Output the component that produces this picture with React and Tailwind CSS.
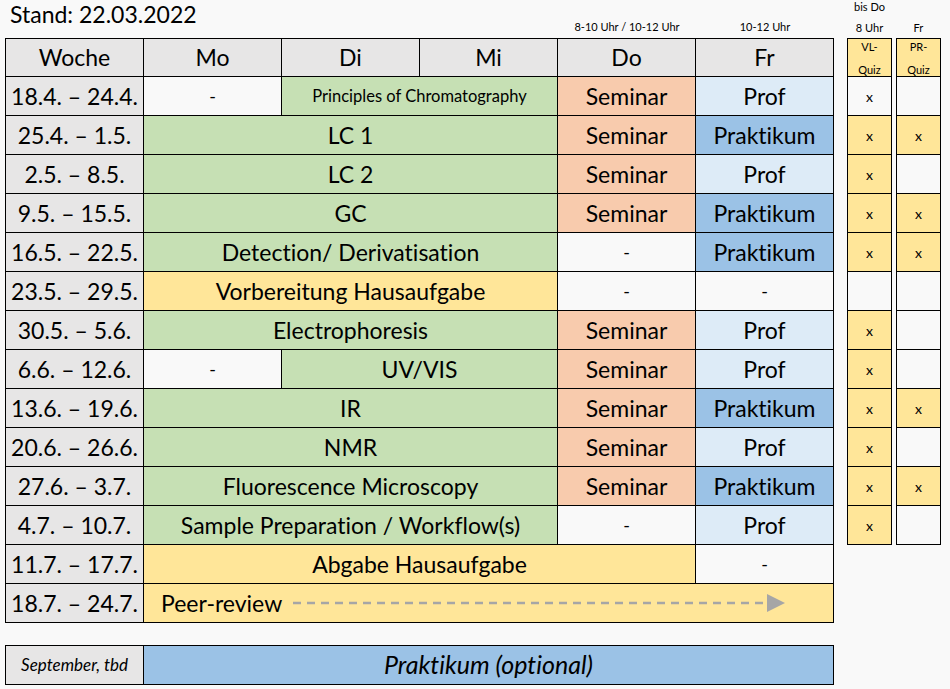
import React from 'react';

const C = {
    gray: 'bg-[#e7e6e6]',
    white: 'bg-[#f9f9f9]',
    green: 'bg-[#c6e0b4]',
    salmon: 'bg-[#f8cbad]',
    light: 'bg-[#ddebf7]',
    blue: 'bg-[#9bc2e6]',
    yellow: 'bg-[#ffe699]',
};

const weeks = [
    { week: '18.4. – 24.4.', cells: [
        { text: '-', bg: C.white, span: 'col-span-1', small: true },
        { text: 'Principles of Chromatography', bg: C.green, span: 'col-span-2', size: 'text-[16.5px]' },
        { text: 'Seminar', bg: C.salmon }, { text: 'Prof', bg: C.light } ] },
    { week: '25.4. – 1.5.', cells: [
        { text: 'LC 1', bg: C.green, span: 'col-span-3' },
        { text: 'Seminar', bg: C.salmon }, { text: 'Praktikum', bg: C.blue } ] },
    { week: '2.5. – 8.5.', cells: [
        { text: 'LC 2', bg: C.green, span: 'col-span-3' },
        { text: 'Seminar', bg: C.salmon }, { text: 'Prof', bg: C.light } ] },
    { week: '9.5. – 15.5.', cells: [
        { text: 'GC', bg: C.green, span: 'col-span-3' },
        { text: 'Seminar', bg: C.salmon }, { text: 'Praktikum', bg: C.blue } ] },
    { week: '16.5. – 22.5.', cells: [
        { text: 'Detection/ Derivatisation', bg: C.green, span: 'col-span-3' },
        { text: '-', bg: C.white, small: true }, { text: 'Praktikum', bg: C.blue } ] },
    { week: '23.5. – 29.5.', cells: [
        { text: 'Vorbereitung Hausaufgabe', bg: C.yellow, span: 'col-span-3' },
        { text: '-', bg: C.white, small: true }, { text: '-', bg: C.white, small: true } ] },
    { week: '30.5. – 5.6.', cells: [
        { text: 'Electrophoresis', bg: C.green, span: 'col-span-3' },
        { text: 'Seminar', bg: C.salmon }, { text: 'Prof', bg: C.light } ] },
    { week: '6.6. – 12.6.', cells: [
        { text: '-', bg: C.white, small: true },
        { text: 'UV/VIS', bg: C.green, span: 'col-span-2' },
        { text: 'Seminar', bg: C.salmon }, { text: 'Prof', bg: C.light } ] },
    { week: '13.6. – 19.6.', cells: [
        { text: 'IR', bg: C.green, span: 'col-span-3' },
        { text: 'Seminar', bg: C.salmon }, { text: 'Praktikum', bg: C.blue } ] },
    { week: '20.6. – 26.6.', cells: [
        { text: 'NMR', bg: C.green, span: 'col-span-3' },
        { text: 'Seminar', bg: C.salmon }, { text: 'Prof', bg: C.light } ] },
    { week: '27.6. – 3.7.', cells: [
        { text: 'Fluorescence Microscopy', bg: C.green, span: 'col-span-3' },
        { text: 'Seminar', bg: C.salmon }, { text: 'Praktikum', bg: C.blue } ] },
    { week: '4.7. – 10.7.', cells: [
        { text: 'Sample Preparation / Workflow(s)', bg: C.green, span: 'col-span-3' },
        { text: '-', bg: C.white, small: true }, { text: 'Prof', bg: C.light } ] },
    { week: '11.7. – 17.7.', cells: [
        { text: 'Abgabe Hausaufgabe', bg: C.yellow, span: 'col-span-4' },
        { text: '-', bg: C.white, small: true } ] },
];

// VL / PR quiz marks per week (rows 1-12)
const vl = [[true, C.white], [true, C.yellow], [true, C.yellow], [true, C.yellow], [true, C.yellow], [false, C.white],
    [true, C.yellow], [true, C.yellow], [true, C.yellow], [true, C.yellow], [true, C.yellow], [true, C.yellow]];
const pr = [false, true, false, true, true, false, false, false, true, false, true, false];

function Cell({ className = '', children }) {
    return <div className={`flex items-center justify-center whitespace-nowrap ${className}`}>{children}</div>;
}

function QuizCol({ label, items }) {
    return (
        <div className="grid grid-rows-[37px_repeat(12,38px)] gap-px bg-black p-px w-[45px] self-start">
            <div className={`${C.yellow} flex flex-col items-center justify-center text-[11px] leading-[23px]`}>
                <span>{label}-</span>
                <span>Quiz</span>
            </div>
            {items.map(([mark, bg], i) => (
                <Cell key={i} className={`${bg} text-[14px]`}>{mark ? 'x' : ''}</Cell>
            ))}
        </div>
    );
}

export default function App() {
    return (
        <div className="w-[950px] h-[689px] bg-[#f9f9f9] text-black px-[5px] flex overflow-hidden [font-variant-ligatures:none]" style={{ fontFamily: 'Lato, "Open Sans", sans-serif' }}>
            <div className="flex flex-col w-[829px]">
                {/* header line */}
                <div className="h-[38px] grid grid-cols-[553px_138px_138px]">
                    <div className="pl-[5px] text-[23px] leading-[29px]">Stand: 22.03.2022</div>
                    <div className="self-end pb-[4px] text-center text-[11px] leading-[14px]">8-10 Uhr / 10-12 Uhr</div>
                    <div className="self-end pb-[4px] text-center text-[11px] leading-[14px]">10-12 Uhr</div>
                </div>

                <div className="grid grid-cols-[repeat(6,137px)] grid-rows-[37px_repeat(14,38px)] gap-px bg-black p-px text-[23px]">
                    {['Woche', 'Mo', 'Di', 'Mi', 'Do', 'Fr'].map((d) => (
                        <Cell key={d} className={C.gray}>{d}</Cell>
                    ))}
                    {weeks.map((w) => (
                        <React.Fragment key={w.week}>
                            <Cell className={C.gray}>{w.week}</Cell>
                            {w.cells.map((c, i) => (
                                <Cell key={i} className={`${c.bg} ${c.span || ''} ${c.small ? 'text-[18px]' : ''} ${c.size || ''}`}>{c.text}</Cell>
                            ))}
                        </React.Fragment>
                    ))}
                    <Cell className={C.gray}>18.7. – 24.7.</Cell>
                    <div className={`${C.yellow} col-span-5 flex items-center pl-[17px]`}>
                        <span>Peer-review</span>
                        <svg width="500" height="20" className="ml-[10px]">
                            <line x1="1" y1="10" x2="476" y2="10" stroke="#a6a6a6" strokeWidth="2.5" strokeDasharray="8 6" />
                            <polygon points="475,1 493,10 475,19" fill="#a6a6a6" />
                        </svg>
                    </div>
                </div>

                <div className="mt-[22px] grid grid-cols-[137px_689px] h-[40px] gap-px bg-black p-px">
                    <Cell className={`${C.gray} italic text-[17px]`}>September, tbd</Cell>
                    <Cell className={`${C.blue} italic text-[25px]`}>Praktikum (optional)</Cell>
                </div>
            </div>

            <div className="flex flex-col ml-[13px]">
                <div className="h-[38px] w-[45px] flex flex-col items-center justify-between pb-[3px] text-[11px] leading-[14px]">
                    <span>bis Do</span>
                    <span>8 Uhr</span>
                </div>
                <QuizCol label="VL" items={vl} />
            </div>
            <div className="flex flex-col ml-[4px]">
                <div className="h-[38px] w-[45px] flex flex-col items-center justify-end pb-[3px] text-[11px] leading-[14px]">
                    <span>Fr</span>
                </div>
                <QuizCol label="PR" items={pr.map((m) => [m, m ? C.yellow : C.white])} />
            </div>
        </div>
    );
}
